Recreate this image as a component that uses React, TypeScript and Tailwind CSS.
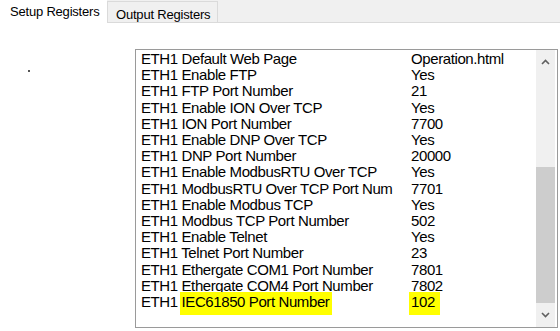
import React from 'react'

const rows: [string, string][] = [
  ['ETH1 Default Web Page', 'Operation.html'],
  ['ETH1 Enable FTP', 'Yes'],
  ['ETH1 FTP Port Number', '21'],
  ['ETH1 Enable ION Over TCP', 'Yes'],
  ['ETH1 ION Port Number', '7700'],
  ['ETH1 Enable DNP Over TCP', 'Yes'],
  ['ETH1 DNP Port Number', '20000'],
  ['ETH1 Enable ModbusRTU Over TCP', 'Yes'],
  ['ETH1 ModbusRTU Over TCP Port Num', '7701'],
  ['ETH1 Enable Modbus TCP', 'Yes'],
  ['ETH1 Modbus TCP Port Number', '502'],
  ['ETH1 Enable Telnet', 'Yes'],
  ['ETH1 Telnet Port Number', '23'],
  ['ETH1 Ethergate COM1 Port Number', '7801'],
  ['ETH1 Ethergate COM4 Port Number', '7802'],
]

export default function App() {
  return (
    <div className="w-[560px] h-[331px] bg-white overflow-hidden font-['Liberation_Sans',Arial,sans-serif] text-black">
      {/* Tabs */}
      <div className="flex h-[23px]">
        <div className="w-[107px] pl-[10px] pt-[2px] text-[13px] tracking-[-0.2px] bg-white">Setup Registers</div>
        <div className="flex-1 flex bg-[#f0f0f0] border-b border-[#dadada]">
          <div className="w-[111px] mt-[1px] pl-[8px] pt-[3px] text-[13px] tracking-[-0.2px] border-x border-t border-[#dadada] bg-[#f0f0f0]">
            Output Registers
          </div>
        </div>
      </div>

      <div className="flex">
        {/* stray dot */}
        <div className="w-[135px] pt-[47px] pl-[28px]">
          <div className="w-[2px] h-[2px] bg-[#555]" />
        </div>

        {/* List box */}
        <div className="mt-[26px] w-[423px] h-[279px] border border-[#9a9a9a] flex">
          <div className="flex-1 pl-[5px] pt-[1px] text-[15px] leading-[16.2px] tracking-[-0.4px]">
            {rows.map(([k, v]) => (
              <div key={k} className="flex">
                <div className="w-[270px] whitespace-nowrap">{k}</div>
                <div>{v}</div>
              </div>
            ))}
            <div className="flex">
              <div className="w-[270px] whitespace-nowrap">
                ETH1 <span className="bg-[#ffff00] -ml-[2px] pl-[2px] pr-[3px] pt-[1px] pb-[5px]">IEC61850 Port Number</span>
              </div>
              <div>
                <span className="bg-[#ffff00] -ml-[2px] pl-[2px] pr-[5px] pt-[1px] pb-[5px]">102</span>
              </div>
            </div>
          </div>

          {/* Scrollbar */}
          <div className="w-[19px] mr-[2px] bg-[#f0f0f0] flex flex-col">
            <div className="h-[24px] flex items-center justify-center">
              <svg width="9" height="6" viewBox="0 0 9 6">
                <path d="M1 5 L4.5 1.5 L8 5" stroke="#606060" strokeWidth="1.6" fill="none" />
              </svg>
            </div>
            <div className="h-[93px]" />
            <div className="h-[136px] bg-[#cdcdcd]" />
            <div className="flex-1 flex items-center justify-center">
              <svg width="9" height="6" viewBox="0 0 9 6">
                <path d="M1 1 L4.5 4.5 L8 1" stroke="#606060" strokeWidth="1.6" fill="none" />
              </svg>
            </div>
          </div>
        </div>
      </div>
    </div>
  )
}
